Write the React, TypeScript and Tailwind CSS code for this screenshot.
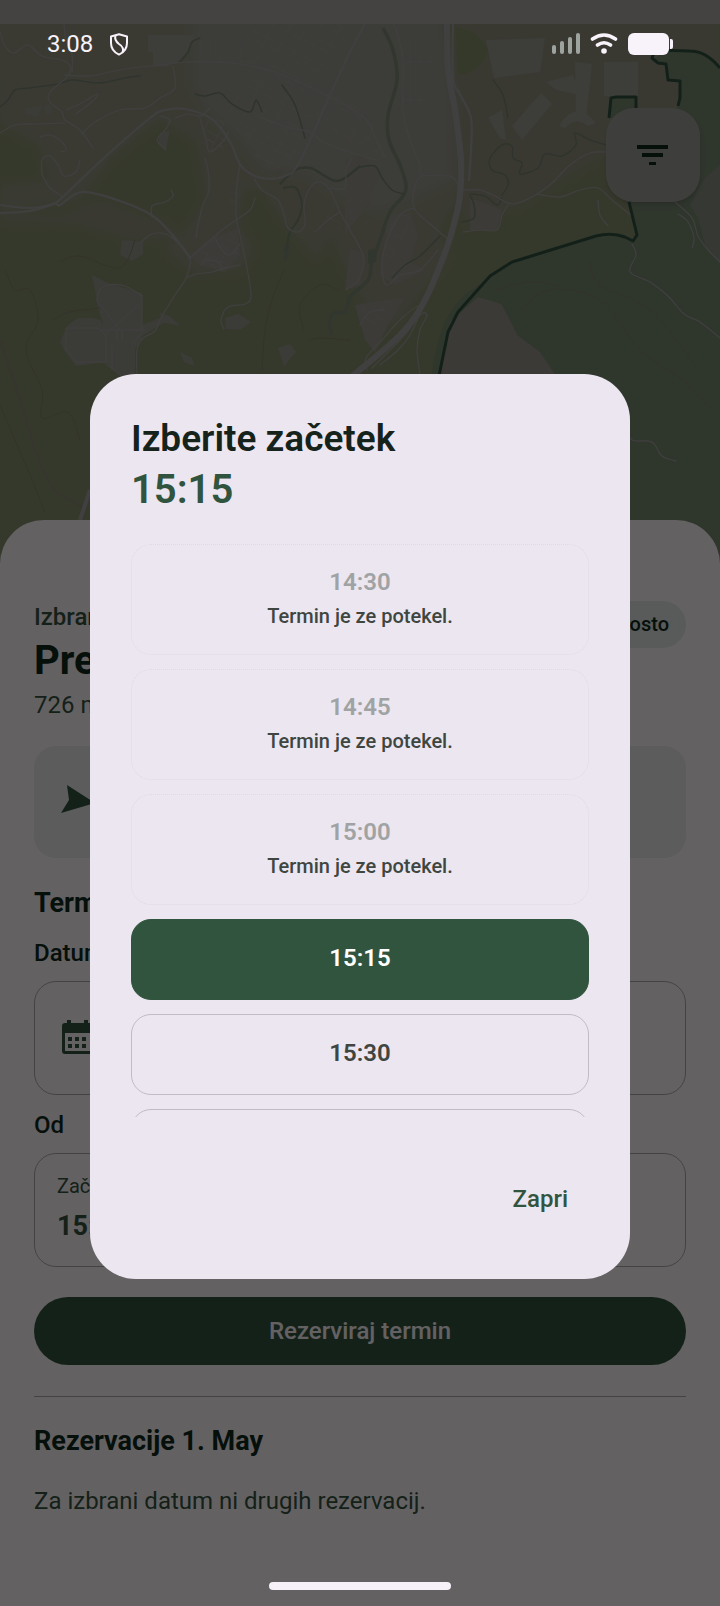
import { useState } from "react";

type Slot = {
  time: string;
  note?: string;
};

const SLOTS: Slot[] = [
  { time: "14:30", note: "Termin je ze potekel." },
  { time: "14:45", note: "Termin je ze potekel." },
  { time: "15:00", note: "Termin je ze potekel." },
  { time: "15:15" },
  { time: "15:30" },
];

const MAIN_ROADS = [
  "0,205 30,208 55,203 68,192 105,157 150,118 165,110 185,109 212,119 230,142 242,167 262,178 285,176 300,161 330,95 350,52 366,22",
  "0,213 30,211 55,204 60,205 82,192 120,201 153,216 175,238 190,258",
  "453,22 453,78 461,96 471,118 471,150 469,180",
];

const STREETS = [
  "0,32 5,46 14,53 28,45 42,56 62,60 70,66 68,76 50,92 50,102 62,112 65,120 80,130 93,148",
  "0,133 15,125 35,124 65,123",
  "64,24 66,40 72,55 72,72",
  "65,75 90,76 120,70 150,66 190,62 240,64 275,72 310,87 345,105",
  "173,66 175,88 160,98 145,108 120,110 95,122 82,134",
  "66,110 80,104 97,94 94,100 76,114",
  "40,137 50,135 62,142 66,150 60,152",
  "42,175 42,160 50,156 58,165 64,176 76,172 80,160",
  "42,175 50,188 62,196",
  "160,116 170,120 165,130 157,140 166,150",
  "175,118 188,114 200,116 210,108",
  "205,158 208,170 209,190 203,205 198,225 196,238",
  "200,118 206,140 210,152 224,140 228,132",
  "240,165 237,185 236,215 240,235 247,268 251,296 245,304 228,307 221,320 224,329",
  "152,217 152,206 165,202 173,196 171,190",
  "140,243 150,235 162,233 175,240 190,258 186,278 175,295 162,316 155,331 143,338 137,350 137,376",
  "190,258 205,245 222,230 236,220 250,210 255,198",
  "186,278 196,274 212,272 225,268 240,265",
  "202,265 206,260 218,262 222,270",
  "215,238 222,250 230,255 240,244",
  "97,300 100,290 108,285 125,286 142,296",
  "254,178 262,190 278,200 284,215 288,228 298,232 305,224 304,205 310,188 320,182 330,190 340,212 350,230 360,248 364,262 358,280 346,290",
  "330,188 345,188 346,170 352,158",
  "340,212 328,220 315,232",
  "376,160 350,152 325,143 310,132 290,128 262,118",
  "345,105 365,118 372,130 385,158",
  "394,24 398,36 403,60 403,110 410,140 420,165 422,175 450,176 460,188",
  "422,175 415,185 414,208 435,228 449,240",
  "414,208 400,215 388,238 382,262 386,285 400,275 420,270 438,250",
  "463,190 480,190 495,196 512,204 530,198 550,185 570,165 590,153 606,152",
  "537,194 560,197 580,190 598,188 612,200 632,216",
  "598,200 600,215 608,226",
  "463,232 480,230 497,230 502,215 508,205",
  "632,244 636,255 630,272 650,282 668,296 684,314 700,322 720,338",
  "675,202 692,218 698,236 708,250 720,262",
  "678,214 688,222 694,238 692,248",
  "630,438 635,441 652,442 662,456 676,461",
  "367,370 366,358 382,340 400,320 418,306 412,325 400,340 388,352 372,368",
  "420,374 417,350 420,330 427,315 420,315 410,335 398,350 380,365",
  "385,310 370,312 360,325",
];

const STREAMS = [
  "0,107 8,100 15,90 30,88 58,84 72,80 100,83 125,78 140,76",
  "180,62 188,52 192,42 200,38",
  "195,94 205,96 220,93 232,104 250,112 256,100 262,112",
  "282,85 295,105 305,138",
  "360,167 375,166 382,178 392,190 404,194",
  "493,80 503,95 508,118",
  "606,145 590,140 575,133 576,145 562,156 545,154 538,168 520,174 522,163 513,158 512,146 502,145 490,158 492,170 505,175 508,185 502,195",
  "470,194 485,196 497,205 502,198",
  "462,222 474,218 474,205 470,195",
  "392,278 405,265 420,256 440,236",
];

const TRACKS = [
  "5,270 15,290 30,290 38,320 26,350 42,390 42,418 68,412 80,440",
  "0,405 15,440 28,470 45,512",
  "52,320 70,312 100,308",
  "60,262 80,256 120,268 135,240",
  "284,270 272,300 265,330 262,370",
  "310,340 320,338 350,340",
  "304,330 300,305 320,285 338,290",
  "495,290 530,282 560,286",
  "520,310 550,290 600,300 640,350 680,378 712,410",
  "590,262 600,285 650,310 700,372",
];

// Catmull-Rom spline through a list of "x,y" points
function smooth(points: string) {
  const p = points.split(" ").map((pair) => pair.split(",").map(Number));
  let d = `M${p[0][0]} ${p[0][1]}`;
  for (let i = 0; i < p.length - 1; i++) {
    const a = p[i - 1] ?? p[i];
    const b = p[i];
    const c = p[i + 1];
    const e = p[i + 2] ?? c;
    d += `C${b[0] + (c[0] - a[0]) / 6} ${b[1] + (c[1] - a[1]) / 6} ${c[0] - (e[0] - b[0]) / 6} ${c[1] - (e[1] - b[1]) / 6} ${c[0]} ${c[1]}`;
  }
  return d;
}

function Lines({ items, stroke, width }: { items: string[]; stroke: string; width: number }) {
  return (
    <g stroke={stroke} strokeWidth={width} strokeLinecap="round">
      {items.map((points) => (
        <path key={points} d={smooth(points)} />
      ))}
    </g>
  );
}

function MapBackdrop() {
  return (
    <svg
      className="absolute inset-x-0 top-0 w-full h-[580px]"
      viewBox="0 0 720 580"
      preserveAspectRatio="xMidYMin slice"
      fill="none"
      aria-hidden="true"
    >
      <defs>
        <pattern id="streets" width="15" height="22" patternUnits="userSpaceOnUse" patternTransform="rotate(27)">
          <path d="M0 0H15M0 0V22M7 8H15" stroke="#a19ea0" strokeWidth="1" />
        </pattern>
        <pattern id="blocks" width="10" height="38" patternUnits="userSpaceOnUse">
          <path d="M0 24H10M0 0V38" stroke="#a19ea0" strokeWidth="1" />
        </pattern>
        <pattern id="fields" width="9" height="9" patternUnits="userSpaceOnUse" patternTransform="rotate(50)">
          <path d="M0 0V9" stroke="#a09d98" strokeWidth="1" />
        </pattern>
        <filter id="soft" x="-10%" y="-10%" width="120%" height="120%">
          <feGaussianBlur stdDeviation="5" />
        </filter>
      </defs>
      <rect width="720" height="580" fill="#868e6d" />

      {/* open land */}
      <g filter="url(#soft)">
        <path d="M-20 10H440L455 90L465 180L440 230L448 260L400 320L380 330L345 270L330 235L318 260L300 240L285 225L262 190L245 190L240 225L255 250L240 270L195 275L165 250L190 225L205 200L200 165L195 140L160 120L110 160L80 200L0 212V185L50 180L38 145L0 125Z" fill="#91927f" />
        <path d="M190 10H445L455 100L460 180L415 200L380 215L345 200L300 175L262 172L235 140L205 112L190 85Z" fill="#97968c" />
        <path d="M455 10H720V180L605 155L520 205L470 225L455 205Z" fill="#8f907d" />
        <path d="M0 212L60 215L100 200L160 220L190 240L130 240L80 225L0 222Z" fill="#8f907d" />
      </g>
      <path d="M148 35H193V40Q185 62 165 67L153 66V52H148ZM486 40L545 38L540 72L494 78ZM546 82L573 75L580 95L556 90ZM575 62L592 64L586 120L576 116ZM604 62H638V96H604ZM512 126L541 93L552 104L522 140ZM559 126Q576 98 596 123L588 126Q575 116 565 128ZM488 118L502 110L506 140L500 138Z" fill="#9a9890" />
      <path d="M456 28Q480 30 488 50Q480 75 458 74Z" fill="#848e66" />
      <path d="M24 108L42 106L38 117L26 115ZM44 106L50 104L52 112L46 115ZM160 133L170 130L166 149L158 143ZM122 240L143 242L143 254L132 261L120 255ZM225 318L238 314L251 322L240 330L226 329ZM160 313L170 316L180 326L162 322ZM180 352L192 358L194 366L184 362ZM278 348L290 344L296 352L284 366ZM92 275L108 283L142 293V325L160 318L165 322L142 336L135 350V376L120 376L106 362L76 366L64 350L60 342L68 325L78 318H93L100 320L105 326L106 350L96 360L78 356L70 346V334L80 328L104 326L98 308L96 295Z" fill="#95938a" />
      <path d="M388 215L410 212L418 235L410 262L425 270L395 285L380 275ZM355 305L385 300L405 298L388 325L375 352L365 340ZM350 248L365 255L360 285L345 290ZM205 242L238 228L240 255L225 272L200 265L190 255ZM470 198L492 206L502 210L497 230L470 230ZM345 160L360 155L380 172L370 200L345 235Z" fill="#96948b" />

      {/* protected area */}
      <path d="M669 49Q705 48 720 68V580H600L432 374Q440 305 478 286L512 262Q560 242 620 234L634 241Q640 222 628 202L610 110V98H635V108H677L680 80H668V64L653 60Z" fill="#76876f" />
      <path d="M478 297L501 304Q508 315 517 335L540 352L556 376H440Q442 350 450 322Z" fill="#94918a" />
      <path d="M690 205L705 178L720 165V262L706 248L698 218Z" fill="#95928a" fillOpacity=".6" />

      <path d="M193 38H246V62H193ZM402 36H434V96L402 114Z" fill="url(#blocks)" />
      <path d="M246 24H350L315 100L298 160L270 172L250 150L225 112L246 85ZM330 90L360 95L388 150L385 162L345 145L325 140L315 110ZM200 118L225 120L228 145L210 152Z" fill="url(#streets)" />
      <path d="M345 175L372 180L385 200L365 225L345 235ZM262 150L300 150L290 175L268 172Z" fill="url(#fields)" fillOpacity=".7" />
      <path d="M388 215L410 215L406 240L385 265ZM200 242L235 228L240 262L205 270ZM335 200L345 240L325 215ZM360 308L395 304L375 345L365 330ZM230 180L240 175L240 220L230 200Z" fill="url(#streets)" fillOpacity=".7" />

      {/* runways */}
      <path d="M96 300L122 332M142 302L108 332M100 330H145M106 332V364L122 376M142 295V332L132 345M112 345V370M117 330V340M122 330V340M66 328H98L106 336M66 328V350L76 362H106" stroke="#a19ea0" strokeWidth="1" />

      {/* river */}
      <path d={smooth("383,28 393,50 397,80 388,115 389,140 400,165 406,185 403,196 390,212 380,240 372,262 368,280 350,297 345,312 333,313 330,325 332,335")} stroke="#7b8976" strokeWidth="3.5" />
      <path d="M368 250L378 248L376 262L368 264ZM284 246L290 244L288 258L284 261Z" fill="#7b8976" />
      <path d={smooth("280,184 295,170 310,168 325,176 335,181 345,178 360,166")} stroke="#75836f" strokeWidth="2.500" />
      <path d={smooth("283,188 296,188 302,205 298,220 290,232 286,250")} stroke="#75836f" strokeWidth="2" />

      <Lines items={TRACKS} stroke="#807f69" width={1} />
      <Lines items={STREAMS} stroke="#748270" width={1.5} />
      <Lines items={STREETS} stroke="#a19ea0" width={1.2} />
      <Lines items={MAIN_ROADS} stroke="#a19ea0" width={2.2} />
      <path d={smooth("447,20 448,70 455,110 461,160 460,195 455,220 446,250 425,300 400,335 350,378")} stroke="#a4a1a2" strokeWidth="6" />
      <path d="M0 340L20 400L40 465L55 492L85 508" stroke="#8b8774" strokeWidth="3" />
      <path d="M90 490L80 520" stroke="#a29fa2" strokeWidth="4" />

      {/* area border */}
      <g stroke="#31513f" strokeWidth="3" strokeLinejoin="round">
        <path d="M720 68Q706 51 690 51L655 50L652 58L658 63L666 64L668 80L680 81V98L678 106" />
        <path d="M609 118L611 98L616 97H636V108" />
        <path d="M629 202L637 235L633 241L625 237Q612 232 596 236L512 262L490 276L458 312L448 332L439 376" />
      </g>
      <rect width="720" height="24" fill="#aaa7a3" />
    </svg>
  );
}

function StatusBar() {
  return (
    <header className="relative z-20 flex items-center justify-between h-11 mt-[22px] px-[47px] text-[#f8f2fa]">
      <div className="flex items-center gap-4">
        <span className="text-2xl leading-8">3:08</span>
        <svg className="w-5 h-[23px]" viewBox="0 0 20 23" fill="none" stroke="currentColor" strokeWidth="2" aria-hidden="true">
          <path d="M10 1.300L18 3.500V10Q18 18 10 21.600Q2 18 2 10V3.500Z" strokeLinejoin="round" />
          <path d="M6.500 2.500Q5 7 10 11Q15.500 14.500 13.500 19.500" />
        </svg>
      </div>
      <div className="flex items-center gap-[9px]">
        <svg className="w-[30px] h-[22px]" viewBox="0 0 30 22" fill="#9da39f" aria-hidden="true">
          <rect x="1" y="12" width="4" height="9" rx="2" />
          <rect x="9" y="8" width="4" height="13" rx="2" />
          <rect x="17" y="4" width="4" height="17" rx="2" />
          <rect x="25" y="0" width="4" height="21" rx="2" />
        </svg>
        <svg className="w-7 h-[22px]" viewBox="0 0 28 22" fill="none" stroke="currentColor" strokeWidth="3.600" strokeLinecap="round" aria-hidden="true">
          <path d="M2.500 6Q14 -2 25.500 6M7.500 12Q14 7.500 20.500 12" />
          <circle cx="14" cy="18" r="2.800" fill="currentColor" stroke="none" />
        </svg>
        <svg className="w-[46px] h-[23px]" viewBox="0 0 46 23" fill="currentColor" aria-hidden="true">
          <rect x="1" y="0" width="41" height="22" rx="6" />
          <path d="M43 6H44Q46 6 46 8V14Q46 16 44 16H43Z" />
        </svg>
      </div>
    </header>
  );
}

function BookingSheet({ start }: { start: string }) {
  return (
    <main className="flex-1 flex flex-col mt-[318px] px-[34px] pt-[81px] rounded-t-[44px] bg-[#faf3f8] text-[#0f281b]">
      <div className="flex items-start justify-between">
        <div>
          <p className="text-2xl leading-8 font-medium text-[#355240]">Izbrano parkirišče</p>
          <h1 className="text-[40px] leading-[56px] font-bold">Prešernova</h1>
          <p className="text-2xl leading-8 text-[#355240]">726 m</p>
        </div>
        <span className="h-[47px] px-[17px] rounded-full bg-[#dce3de] text-xl leading-[46px] font-medium">Prosto</span>
      </div>

      <button type="button" className="flex items-center h-[112px] mt-[25px] px-[26px] rounded-[22px] bg-[#e3e5e4]">
        <svg className="w-9 h-9" viewBox="0 0 36 36" fill="#31543f" aria-hidden="true">
          <path d="M7 1L35 19L1 29L9 16Z" />
        </svg>
      </button>

      <h2 className="mt-[27px] text-[27px] leading-9 font-bold">Termin</h2>
      <h3 className="mt-4 text-2xl leading-8 font-medium">Datum</h3>
      <button type="button" aria-label="Datum" className="flex items-center h-[114px] mt-3 px-[26px] rounded-[22px] border border-[#aaa8aa]">
        <svg className="w-[38px] h-9" viewBox="0 0 38 36" fill="#31543f" aria-hidden="true">
          <path fillRule="evenodd" d="M6 0H10V3H23V0H27V3H32Q35 3 35 6V31Q35 34 32 34H4Q1 34 1 31V6Q1 3 4 3H6ZM4 13V31H32V13Z" />
          <path d="M7 17H11V21H7ZM14 17H18V21H14ZM21 17H25V21H21ZM7 24H11V28H7ZM14 24H18V28H14ZM21 24H25V28H21Z" />
        </svg>
      </button>

      <h3 className="mt-[14px] text-2xl leading-8 font-medium">Od</h3>
      <button type="button" className="flex flex-col items-start h-[114px] mt-3 px-[22px] pt-[14px] rounded-[22px] border border-[#aaa8aa] text-[#355240]">
        <span className="text-xl leading-9">Začetek</span>
        <span className="text-[27px] leading-[44px] font-bold">{start}</span>
      </button>

      <button type="button" className="h-[68px] mt-[30px] rounded-full bg-[#34543f] text-2xl leading-8 font-medium text-[#faf3f8]">
        Rezerviraj termin
      </button>

      <hr className="mt-[31px] border-t border-[#aaa8aa]" />

      <h2 className="mt-[26px] text-[27px] leading-9 font-bold">Rezervacije 1. May</h2>
      <p className="mt-6 text-2xl leading-9 text-[#355240]">Za izbrani datum ni drugih rezervacij.</p>

      <div className="relative z-20 self-center w-[182px] h-2 mt-auto mb-4 rounded-full bg-[#f6f0f8]" />
    </main>
  );
}

function slotClass(slot: Slot, selected: boolean) {
  const base = "shrink-0 w-full rounded-[20px] border text-center";
  if (slot.note) return `${base} h-[111px] border-dotted border-[#dfdae3] text-[#a0a3a3]`;
  if (selected) return `${base} h-[81px] pb-0.5 border-[#31543f] bg-[#31543f] text-white`;
  return `${base} h-[81px] pb-0.5 border-[#c0bcc3] text-[#404540]`;
}

function StartDialog({ value, onChange }: { value: string; onChange: (time: string) => void }) {
  return (
    <div className="absolute inset-0 z-10 flex items-center justify-center pt-[46px] bg-black/60">
      <div role="dialog" aria-labelledby="start-title" className="flex flex-col w-3/4 px-[41px] pt-[41px] pb-[46px] rounded-[46px] bg-[#ece6f0]">
        <h2 id="start-title" className="text-[37px] leading-[48px] font-semibold text-[#15231b]">Izberite začetek</h2>
        <p className="text-[40px] leading-[54px] font-semibold text-[#31543f]">{value}</p>

        <div className="flex flex-col gap-[14px] h-[573px] mt-[27px] overflow-hidden">
          {SLOTS.map((slot) => (
            <button
              key={slot.time}
              type="button"
              disabled={Boolean(slot.note)}
              onClick={() => onChange(slot.time)}
              className={slotClass(slot, slot.time === value)}
            >
              <span className="block text-2xl leading-8 font-semibold">{slot.time}</span>
              {slot.note && (
                <span className="block mt-0.5 text-xl leading-8 font-medium text-[#3f4640]">{slot.note}</span>
              )}
            </button>
          ))}
          {/* next slot, only its top edge is in view */}
          <button
            type="button"
            aria-label="15:45"
            onClick={() => onChange("15:45")}
            className="shrink-0 w-full h-[81px] rounded-[20px] border border-[#c0bcc3]"
          />
        </div>

        <button type="button" className="self-end h-[68px] mt-[48px] px-[21px] text-2xl leading-8 font-medium text-[#31543f]">
          Zapri
        </button>
      </div>
    </div>
  );
}

export default function App() {
  const [start, setStart] = useState("15:15");

  return (
    <div className="relative flex flex-col min-h-screen overflow-hidden bg-[#878f6e] font-[Roboto,sans-serif]">
      <MapBackdrop />
      <StatusBar />
      <div className="relative flex justify-end mt-[42px] px-5">
        <button
          type="button"
          aria-label="Filter"
          className="flex items-center justify-center w-[94px] h-[94px] rounded-[28px] bg-[#9b9f96] shadow-md shadow-black/10"
        >
          <svg className="w-8 h-[22px]" viewBox="0 0 32 22" fill="#0f281b" aria-hidden="true">
            <path d="M0 1H31V5H0ZM5 9H26V13H5ZM12 18H19V21H12Z" />
          </svg>
        </button>
      </div>
      {/* sheet sits over the lower edge of the map */}
      <div className="relative flex flex-1 flex-col">
        <BookingSheet start={start} />
      </div>
      <StartDialog value={start} onChange={setStart} />
    </div>
  );
}
